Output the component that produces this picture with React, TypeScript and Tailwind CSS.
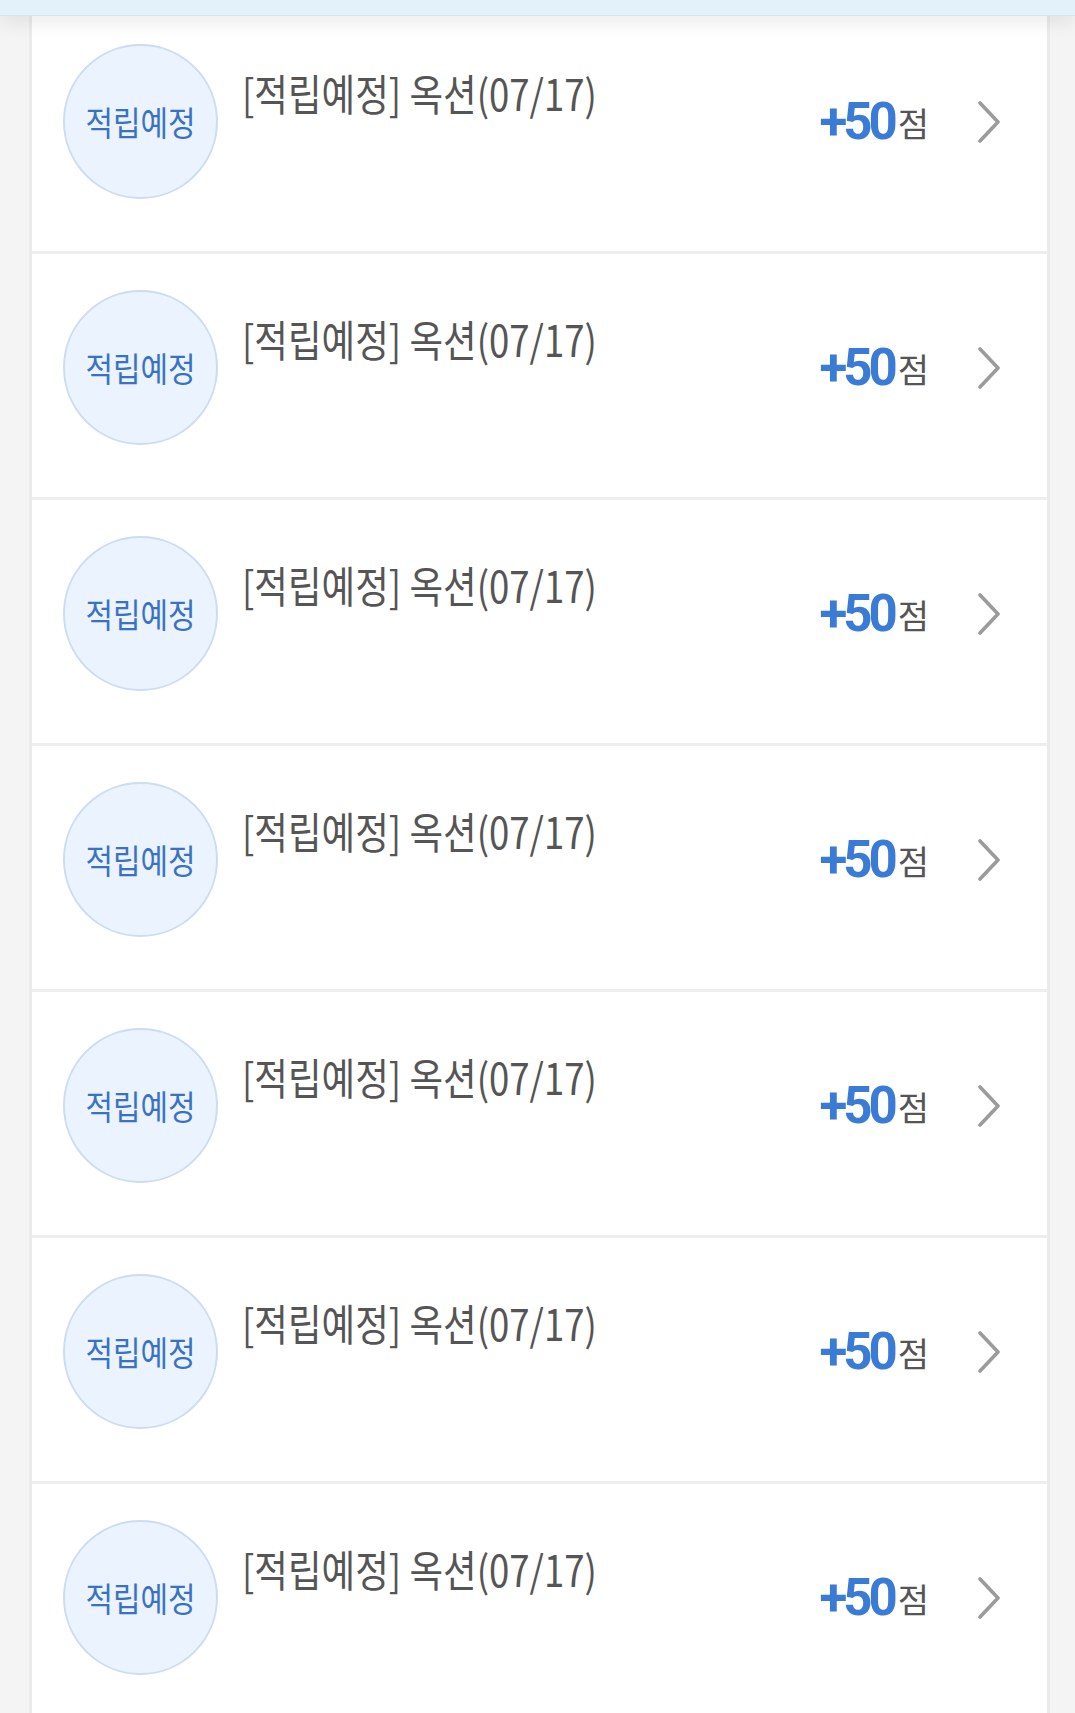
const items = Array.from({ length: 7 }, (_, i) => ({
  id: i,
  badge: "적립예정",
  title: "[적립예정] 옥션(07/17)",
  point: 50,
}));

const Chevron = () => (
  <svg width="24" height="42" viewBox="0 0 24 42" fill="none">
    <polyline
      points="3,2 21,21 3,40"
      stroke="#9b9b9b"
      strokeWidth="3.6"
      strokeLinecap="round"
      strokeLinejoin="round"
    />
  </svg>
);

export default function App() {
  return (
    <div className="relative h-[1713px] overflow-hidden bg-[#f4f4f4] font-['Noto_Sans_CJK_KR',sans-serif]">
      {/* header strip, fixed over the list */}
      <div className="absolute inset-x-0 top-0 z-10 h-4 border-b border-[#d2e5f1] bg-[#e3f1fa] shadow-[0_6px_18px_rgba(0,0,0,0.09)]" />

      <ul className="ml-[29px] mr-[25px] mt-2 border-x-[3px] border-[#ebebeb] bg-white">
        {items.map((item) => (
          <li key={item.id} className="flex h-[246px] border-b-[3px] border-[#eeeeee] pl-[31px] pr-[46px] pt-[36px]">
            <div className="flex h-[155px] w-[155px] shrink-0 items-center justify-center rounded-full border-2 border-[#cddcef] bg-[#eaf3fe]">
              <span className="inline-block scale-x-[0.88] text-[34px] leading-none text-[#3a72c3]">{item.badge}</span>
            </div>

            <div className="min-w-0 flex-1 pl-[24px] pt-[27px]">
              <span className="inline-block origin-left scale-x-[0.85] whitespace-nowrap text-[43px] leading-none text-[#555555]">
                {item.title}
              </span>
            </div>

            <div className="flex h-[155px] items-center">
              <div className="flex items-baseline">
                <span className="font-['Roboto',sans-serif] text-[51px] font-bold leading-none tracking-[-4px] text-[#3a7bd5]">
                  +{item.point}
                </span>
                <span className="relative -top-[2px] ml-[4px] inline-block text-[34px] leading-none text-[#555555]">점</span>
              </div>
              <div className="ml-[48px]">
                <Chevron />
              </div>
            </div>
          </li>
        ))}
      </ul>
    </div>
  );
}
